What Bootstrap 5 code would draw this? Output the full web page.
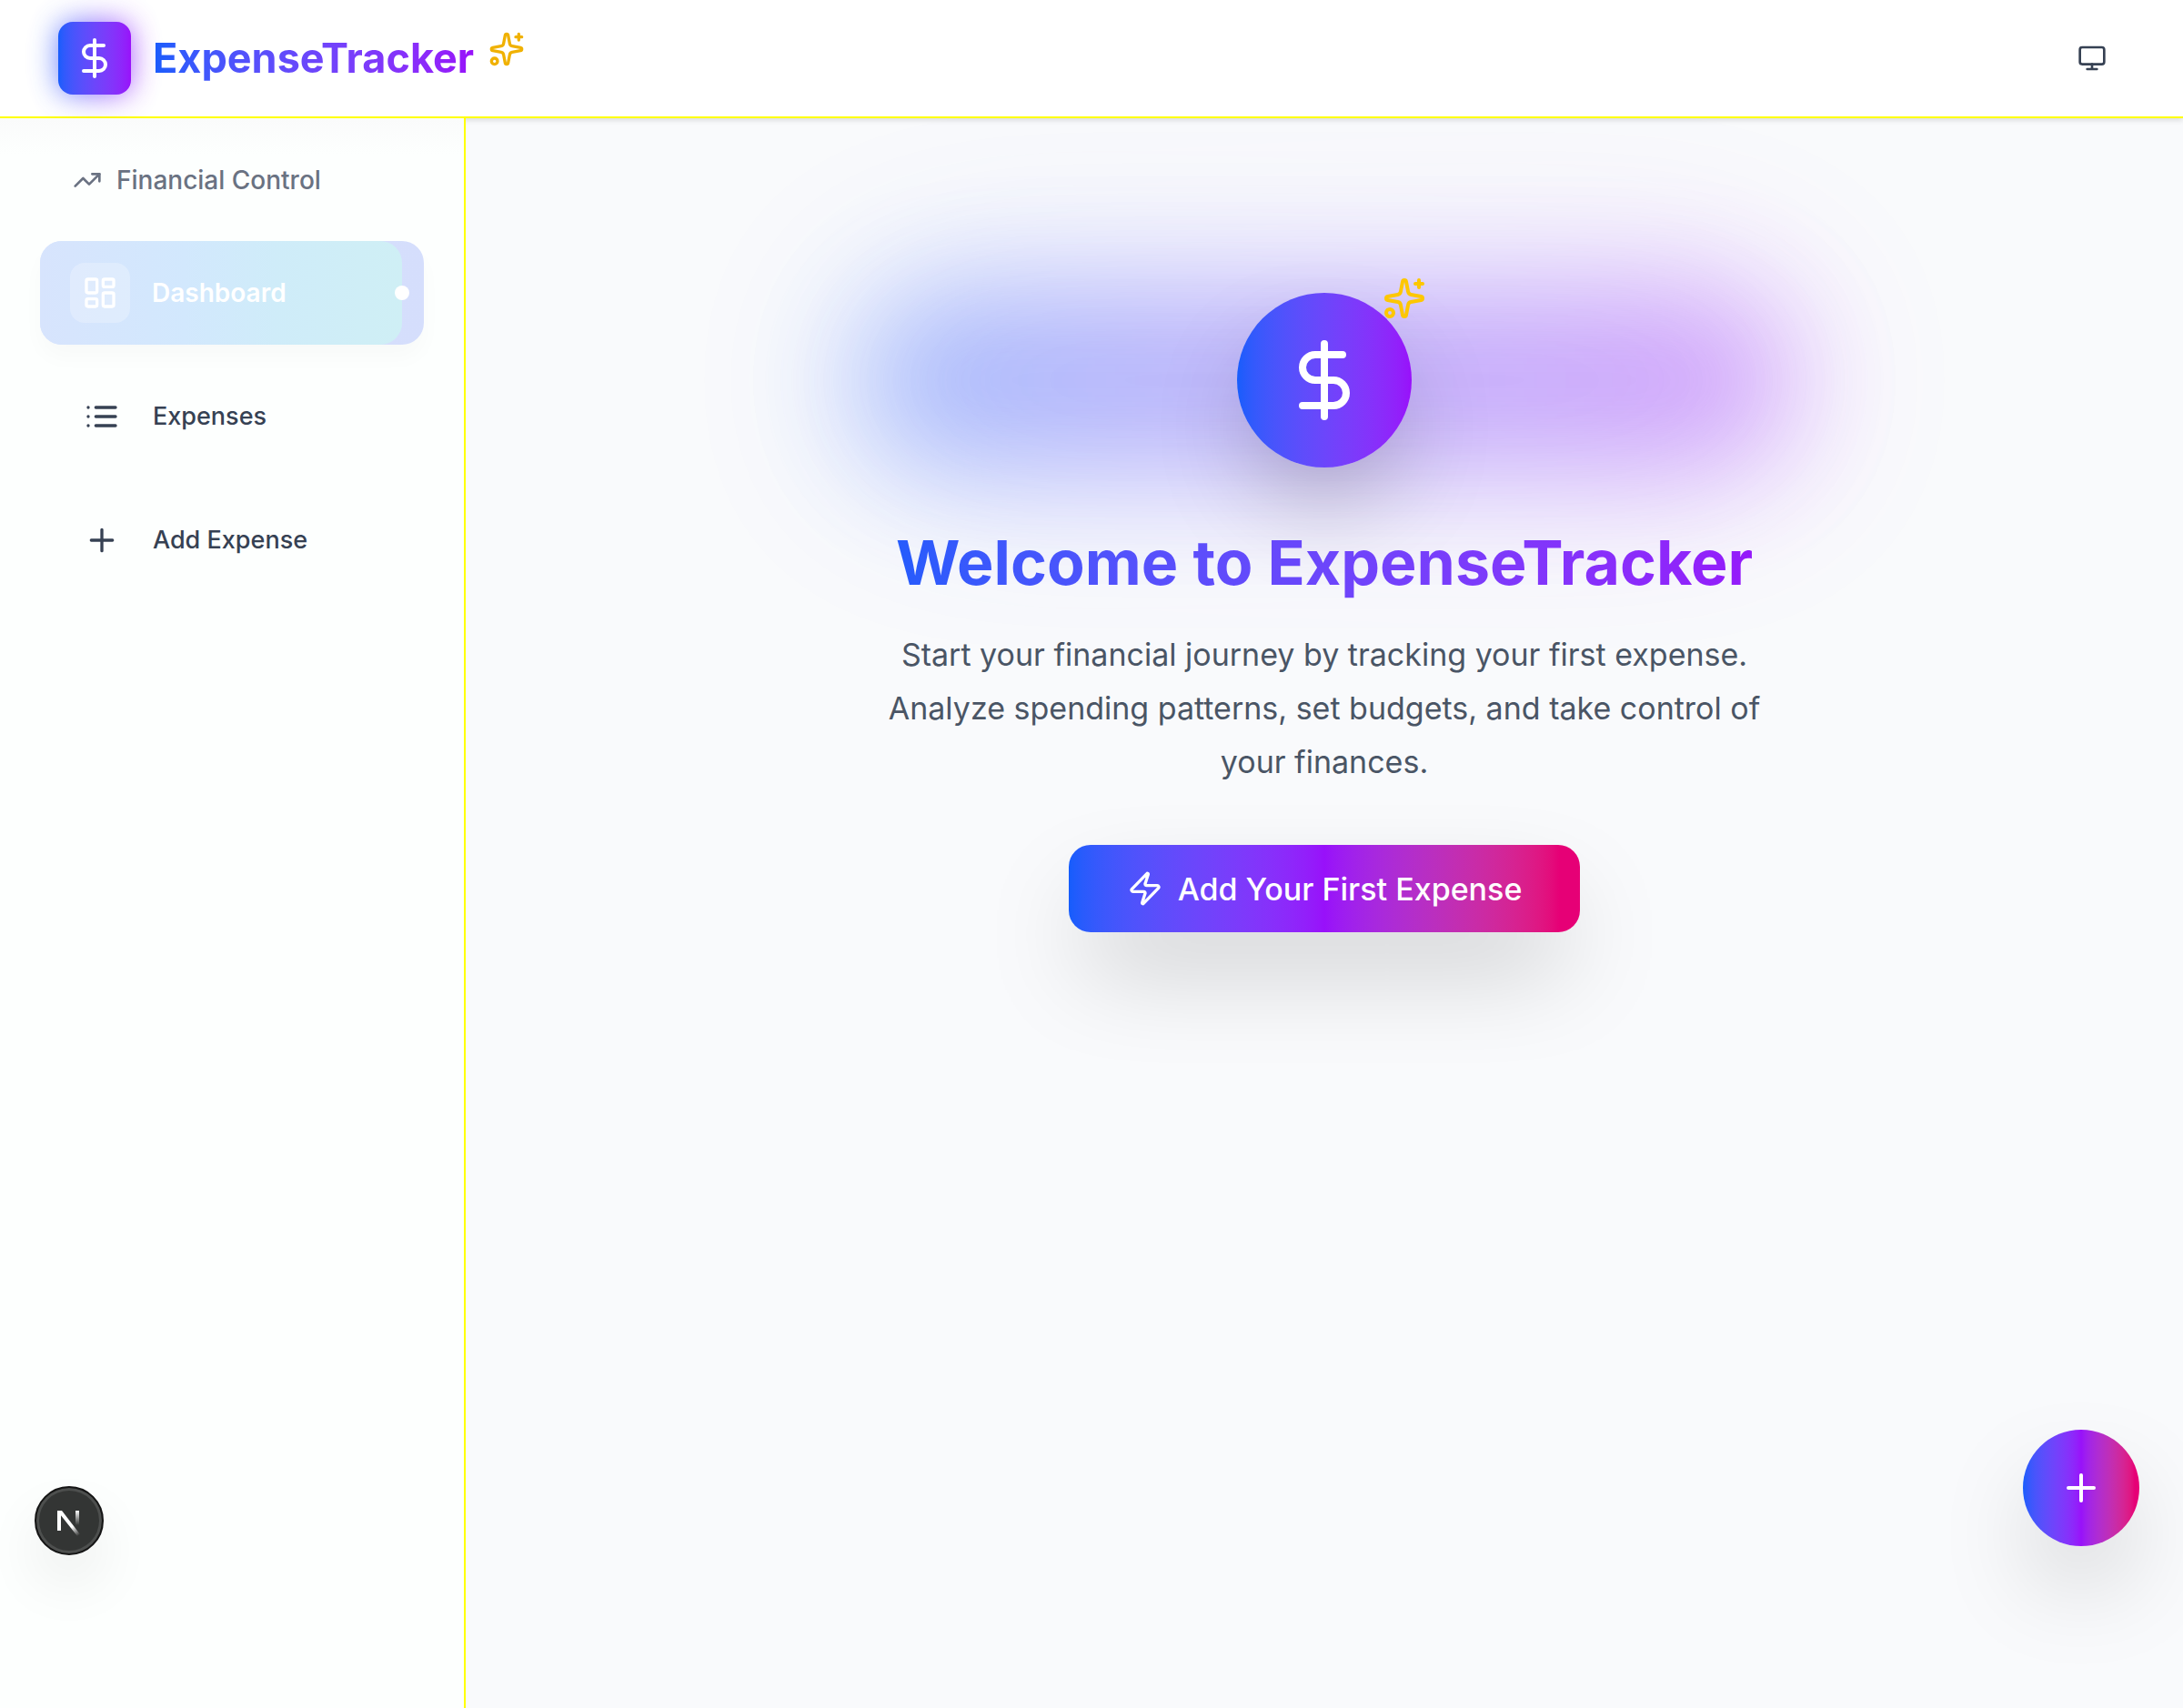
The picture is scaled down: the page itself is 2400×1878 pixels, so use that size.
<!DOCTYPE html>
<html lang="en">
<head>
<meta charset="utf-8">
<meta name="viewport" content="width=device-width, initial-scale=1">
<title>ExpenseTracker</title>
<link href="https://cdn.jsdelivr.net/npm/bootstrap@5.3.0/dist/css/bootstrap.min.css" rel="stylesheet">
<style>
  :root {
    --line: #ffff00;
    --ink: #364153;
    --duo: linear-gradient(to right in oklab, #155dfc, #9810fa);
    --trio: linear-gradient(to right in oklab, #155dfc, #9810fa 50%, #e60076 96%);
    --lift: 0 50px 110px -20px rgba(0, 0, 0, .25);
  }
  body { font-family: Inter, "Liberation Sans", sans-serif; background: #f9fafc; color: var(--ink); font-size: 27px; line-height: 40px; }
  svg { fill: none; stroke: currentColor; stroke-width: 2; stroke-linecap: round; stroke-linejoin: round; flex-shrink: 0; display: block; }
  .i-32 { width: 32px; height: 32px; }
  .i-40 { width: 40px; height: 40px; }
  .i-48 { width: 48px; height: 48px; }
  .i-96 { width: 96px; height: 96px; }

  .topbar { height: 130px; padding: 0 64px; background: #fff; border-bottom: 2px solid var(--line); box-shadow: 0 2px 6px rgba(0, 0, 0, .14); z-index: 3; }
  .brand { gap: 24px; }
  .brand-mark { width: 80px; height: 80px; color: #fff; }
  .brand-mark::before, .brand-mark::after { content: ""; position: absolute; inset: 0; border-radius: 16px; background: var(--duo); z-index: -1; }
  .brand-mark::before { filter: blur(16px); opacity: .75; }
  .brand-name { font-size: 45px; line-height: 64px; }
  .gradient-text { background: var(--duo); -webkit-background-clip: text; background-clip: text; color: transparent; }
  .spark-sm { color: #f0b100; margin: 0 0 20px -8px; }
  .theme-btn { width: 72px; height: 72px; color: var(--ink); }

  .sidebar { width: 512px; padding: 40px 48px; background: linear-gradient(#fafbfb, #fdfffe 40px); border-right: 2px solid var(--line); z-index: 4; }
  .side-head { gap: 16px; padding: 8px 32px; color: #6a7282; font-size: 28px; margin-bottom: 40px; }
  .side-list { gap: 24px; }
  .side-link { height: 112px; gap: 24px; padding: 0 32px; color: var(--ink); text-decoration: none; border-radius: 24px; }
  .icon-tile { width: 64px; height: 64px; border-radius: 16px; }
  .side-link.current { height: 114px; margin: -1px -4px; padding: 0 33px; color: #fff; font-size: 28px; font-weight: 600; background: linear-gradient(to right, #d7e3fd, #d5defc); box-shadow: 0 14px 24px rgba(0, 0, 0, .025); }
  .side-link.current::before { content: ""; position: absolute; inset: 0 24px 0 0; border-radius: 24px; background: linear-gradient(to right, #d7e4fd, #d2e8fd 40%, #cfecf9 65%, #cfeff5); }
  .side-link.current .icon-tile { width: 66px; height: 66px; background: rgba(255, 255, 255, .25); }
  .current-dot { width: 16px; height: 16px; right: 16px; top: 49px; }

  .welcome { padding: 192px 48px; }
  .welcome-inner { max-width: 1024px; }
  .hero-art { margin-bottom: 60px; }
  .hero-art::before, .hero-art::after { content: ""; position: absolute; inset: 0; border-radius: 96px; background: var(--duo); }
  .hero-art::before { filter: blur(64px); opacity: .32; }
  .hero-art::after { filter: blur(108px); opacity: .18; }
  .hero-disc { width: 192px; height: 192px; background: var(--duo); box-shadow: var(--lift); color: #fff; }
  .spark-lg { color: #fdc700; top: -18px; right: -16px; }
  .hero-title { font-size: 68px; line-height: 88px; margin-bottom: 28px; }
  .hero-text { font-size: 34px; line-height: 59px; color: #4a5565; margin-bottom: 62px; }
  .cta { height: 96px; padding: 0 64px; gap: 16px; border: 0; border-radius: 24px; font-size: 34px; color: #fff; background: var(--trio); box-shadow: var(--lift); }
  .cta:hover { color: #fff; }

  .fab { width: 128px; height: 128px; right: 48px; bottom: 178px; border: 0; color: #fff; background: var(--trio); box-shadow: var(--lift); z-index: 5; }
  .dev-badge { width: 76px; height: 76px; left: 38px; bottom: 168px; border: 2px solid #151515; background: #333534; box-shadow: inset 0 0 0 3px #4d4f4e, 0 32px 64px rgba(0, 0, 0, .07); z-index: 6; }
  .dev-badge svg { width: 76px; height: 76px; }
</style>
</head>
<body class="min-vh-100 d-flex flex-column">

<header class="topbar d-flex align-items-center justify-content-between position-relative">
  <div class="brand d-flex align-items-center">
    <span class="brand-mark d-flex align-items-center justify-content-center position-relative z-1">
      <svg class="i-48" viewBox="0 0 24 24" aria-hidden="true"><path d="M12 2v20M17 5H9.5a3.5 3.5 0 0 0 0 7h5a3.5 3.5 0 0 1 0 7H6"/></svg>
    </span>
    <span class="brand-name gradient-text fw-bold">ExpenseTracker</span>
    <svg class="i-40 spark-sm" viewBox="0 0 24 24" aria-hidden="true"><use href="#sparkles"/></svg>
  </div>
  <button type="button" class="theme-btn btn p-0 border-0 d-flex align-items-center justify-content-center" aria-label="Theme">
    <svg class="i-32" viewBox="0 0 24 24" aria-hidden="true"><rect x="2" y="3" width="20" height="14" rx="2"/><path d="M8 21h8M12 17v4"/></svg>
  </button>
</header>

<div class="d-flex flex-grow-1">
  <aside class="sidebar flex-shrink-0 position-relative">
    <div class="side-head d-flex align-items-center fw-medium">
      <svg class="i-32" viewBox="0 0 24 24" aria-hidden="true"><path d="M16 7h6v6"/><path d="m22 7-8.5 8.5-5-5L2 17"/></svg>
      <span>Financial Control</span>
    </div>
    <nav class="side-list d-flex flex-column fw-medium">
      <a href="#" class="side-link current d-flex align-items-center position-relative" aria-current="page">
        <span class="icon-tile d-flex align-items-center justify-content-center position-relative">
          <svg class="i-40" viewBox="0 0 24 24" aria-hidden="true"><rect x="3" y="3" width="7" height="9" rx="1"/><rect x="14" y="3" width="7" height="5" rx="1"/><rect x="14" y="12" width="7" height="9" rx="1"/><rect x="3" y="16" width="7" height="5" rx="1"/></svg>
        </span>
        <span class="position-relative">Dashboard</span>
        <span class="current-dot bg-white rounded-circle position-absolute"></span>
      </a>
      <a href="#" class="side-link d-flex align-items-center">
        <span class="icon-tile d-flex align-items-center justify-content-center">
          <svg class="i-40" viewBox="0 0 24 24" aria-hidden="true"><path d="M3 6h.01M3 12h.01M3 18h.01M8 6h13M8 12h13M8 18h13"/></svg>
        </span>
        <span>Expenses</span>
      </a>
      <a href="#" class="side-link d-flex align-items-center">
        <span class="icon-tile d-flex align-items-center justify-content-center">
          <svg class="i-40" viewBox="0 0 24 24" aria-hidden="true"><path d="M5 12h14M12 5v14"/></svg>
        </span>
        <span>Add Expense</span>
      </a>
    </nav>
  </aside>

  <main class="welcome flex-grow-1">
    <div class="welcome-inner mx-auto text-center">
      <div class="hero-art position-relative d-flex justify-content-center">
        <div class="hero-disc rounded-circle position-relative z-1 d-flex align-items-center justify-content-center">
          <svg class="i-96" viewBox="0 0 24 24" aria-hidden="true"><path d="M12 2v20M17 5H9.5a3.5 3.5 0 0 0 0 7h5a3.5 3.5 0 0 1 0 7H6"/></svg>
          <svg class="i-48 spark-lg position-absolute" viewBox="0 0 24 24" aria-hidden="true">
            <g id="sparkles"><path d="M11.017 2.814a1 1 0 0 1 1.966 0l1.051 5.558a2 2 0 0 0 1.594 1.594l5.558 1.051a1 1 0 0 1 0 1.966l-5.558 1.051a2 2 0 0 0-1.594 1.594l-1.051 5.558a1 1 0 0 1-1.966 0l-1.051-5.558a2 2 0 0 0-1.594-1.594l-5.558-1.051a1 1 0 0 1 0-1.966l5.558-1.051a2 2 0 0 0 1.594-1.594z"/><path d="M20 2v4M22 4h-4"/><circle cx="4" cy="20" r="2"/></g>
          </svg>
        </div>
      </div>
      <h1 class="hero-title gradient-text fw-bold position-relative z-1">Welcome to ExpenseTracker</h1>
      <p class="hero-text position-relative z-1">Start your financial journey by tracking your first expense. Analyze spending patterns, set budgets, and take control of your finances.</p>
      <button type="button" class="cta btn d-inline-flex align-items-center fw-medium">
        <svg class="i-40" viewBox="0 0 24 24" aria-hidden="true"><path d="M4 14a1 1 0 0 1-.78-1.63l9.9-10.2a.5.5 0 0 1 .86.46l-1.92 6.02A1 1 0 0 0 13 10h7a1 1 0 0 1 .78 1.63l-9.9 10.2a.5.5 0 0 1-.86-.46l1.92-6.02A1 1 0 0 0 11 14z"/></svg>
        <span>Add Your First Expense</span>
      </button>
    </div>
  </main>
</div>

<button type="button" class="fab btn p-0 rounded-circle position-fixed d-flex align-items-center justify-content-center" aria-label="Add expense">
  <svg class="i-48" viewBox="0 0 24 24" aria-hidden="true"><path d="M5 12h14M12 5v14"/></svg>
</button>

<button type="button" class="dev-badge btn p-0 rounded-circle position-fixed d-flex align-items-center justify-content-center" aria-label="Developer tools">
  <svg viewBox="0 0 76 76" aria-hidden="true">
    <defs>
      <linearGradient id="fadeDiagonal" gradientUnits="userSpaceOnUse" x1="39" y1="40" x2="49" y2="54"><stop offset="0.3" stop-color="#fff"/><stop offset="1" stop-color="#fff" stop-opacity="0"/></linearGradient>
      <linearGradient id="fadeStem" gradientUnits="userSpaceOnUse" x1="47" y1="27" x2="47" y2="43"><stop stop-color="#fff"/><stop offset="1" stop-color="#fff" stop-opacity="0"/></linearGradient>
    </defs>
    <g stroke="none">
      <rect x="25" y="27" width="4" height="22" fill="#fff"/>
      <polygon points="25,27 30,27 50,53 47,55 28,31" fill="url(#fadeDiagonal)"/>
      <rect x="45" y="27" width="4" height="16" fill="url(#fadeStem)"/>
    </g>
  </svg>
</button>

<script src="https://cdn.jsdelivr.net/npm/bootstrap@5.3.0/dist/js/bootstrap.bundle.min.js"></script>
</body>
</html>
